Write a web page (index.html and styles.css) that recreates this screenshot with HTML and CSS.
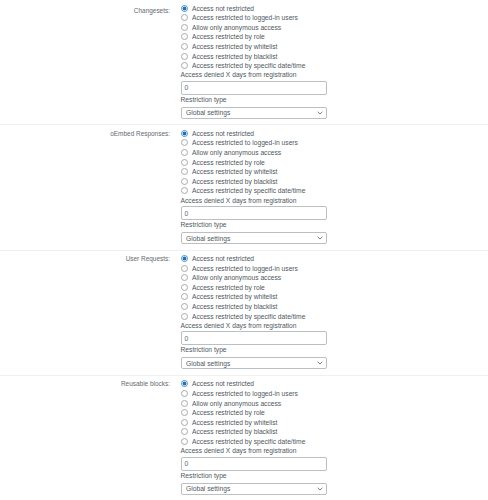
FILE: index.html
```html
<!DOCTYPE html>
<html lang="en">
<head>
<meta charset="utf-8">
<title>Access settings</title>
<link rel="stylesheet" href="styles.css">
</head>
<body>
<div class="settings">

  <section class="setting setting-first">
    <div class="setting-label">Changesets:</div>
    <div class="setting-field">
      <label class="opt"><input type="radio" name="s1" checked>Access not restricted</label>
      <label class="opt"><input type="radio" name="s1">Access restricted to logged-in users</label>
      <label class="opt"><input type="radio" name="s1">Allow only anonymous access</label>
      <label class="opt"><input type="radio" name="s1">Access restricted by role</label>
      <label class="opt"><input type="radio" name="s1">Access restricted by whitelist</label>
      <label class="opt"><input type="radio" name="s1">Access restricted by blacklist</label>
      <label class="opt"><input type="radio" name="s1">Access restricted by specific date/time</label>
      <div class="field-label">Access denied X days from registration</div>
      <div class="text-input">0</div>
      <div class="field-label field-label-select">Restriction type</div>
      <div class="select"><span>Global settings</span><svg class="chev" viewBox="0 0 6 4" width="6" height="4"><path d="M0.6 0.8 L3 3 L5.4 0.8" fill="none" stroke="#6b7075" stroke-width="0.9"/></svg></div>
    </div>
  </section>

  <section class="setting">
    <div class="setting-label">oEmbed Responses:</div>
    <div class="setting-field">
      <label class="opt"><input type="radio" name="s2" checked>Access not restricted</label>
      <label class="opt"><input type="radio" name="s2">Access restricted to logged-in users</label>
      <label class="opt"><input type="radio" name="s2">Allow only anonymous access</label>
      <label class="opt"><input type="radio" name="s2">Access restricted by role</label>
      <label class="opt"><input type="radio" name="s2">Access restricted by whitelist</label>
      <label class="opt"><input type="radio" name="s2">Access restricted by blacklist</label>
      <label class="opt"><input type="radio" name="s2">Access restricted by specific date/time</label>
      <div class="field-label">Access denied X days from registration</div>
      <div class="text-input">0</div>
      <div class="field-label field-label-select">Restriction type</div>
      <div class="select"><span>Global settings</span><svg class="chev" viewBox="0 0 6 4" width="6" height="4"><path d="M0.6 0.8 L3 3 L5.4 0.8" fill="none" stroke="#6b7075" stroke-width="0.9"/></svg></div>
    </div>
  </section>

  <section class="setting">
    <div class="setting-label">User Requests:</div>
    <div class="setting-field">
      <label class="opt"><input type="radio" name="s3" checked>Access not restricted</label>
      <label class="opt"><input type="radio" name="s3">Access restricted to logged-in users</label>
      <label class="opt"><input type="radio" name="s3">Allow only anonymous access</label>
      <label class="opt"><input type="radio" name="s3">Access restricted by role</label>
      <label class="opt"><input type="radio" name="s3">Access restricted by whitelist</label>
      <label class="opt"><input type="radio" name="s3">Access restricted by blacklist</label>
      <label class="opt"><input type="radio" name="s3">Access restricted by specific date/time</label>
      <div class="field-label">Access denied X days from registration</div>
      <div class="text-input">0</div>
      <div class="field-label field-label-select">Restriction type</div>
      <div class="select"><span>Global settings</span><svg class="chev" viewBox="0 0 6 4" width="6" height="4"><path d="M0.6 0.8 L3 3 L5.4 0.8" fill="none" stroke="#6b7075" stroke-width="0.9"/></svg></div>
    </div>
  </section>

  <section class="setting">
    <div class="setting-label">Reusable blocks:</div>
    <div class="setting-field">
      <label class="opt"><input type="radio" name="s4" checked>Access not restricted</label>
      <label class="opt"><input type="radio" name="s4">Access restricted to logged-in users</label>
      <label class="opt"><input type="radio" name="s4">Allow only anonymous access</label>
      <label class="opt"><input type="radio" name="s4">Access restricted by role</label>
      <label class="opt"><input type="radio" name="s4">Access restricted by whitelist</label>
      <label class="opt"><input type="radio" name="s4">Access restricted by blacklist</label>
      <label class="opt"><input type="radio" name="s4">Access restricted by specific date/time</label>
      <div class="field-label">Access denied X days from registration</div>
      <div class="text-input">0</div>
      <div class="field-label field-label-select">Restriction type</div>
      <div class="select"><span>Global settings</span><svg class="chev" viewBox="0 0 6 4" width="6" height="4"><path d="M0.6 0.8 L3 3 L5.4 0.8" fill="none" stroke="#6b7075" stroke-width="0.9"/></svg></div>
    </div>
  </section>

</div>
</body>
</html>
```

FILE: styles.css
```css
html, body {
  margin: 0;
  padding: 0;
  background: #ffffff;
}

body {
  font-family: "Liberation Sans", Arial, sans-serif;
  color: #50575e;
  overflow: hidden;
}

.settings {
  display: flex;
  flex-direction: column;
}

.setting {
  display: flex;
  align-items: flex-start;
  padding: 3.3px 0 5.5px 0;
  border-bottom: 1px solid #f0f0f1;
}

.setting-label {
  width: 170px;
  flex: none;
  text-align: right;
  font-size: 6.45px;
  line-height: 9.6px;
  color: #646970;
}

.setting-first .setting-label {
  padding-top: 2.6px;
}

.setting-field {
  margin-left: 10.5px;
  display: flex;
  flex-direction: column;
  width: 146px;
}

.opt {
  display: flex;
  align-items: center;
  height: 9.6px;
  font-size: 6.7px;
  white-space: nowrap;
}

.opt input {
  appearance: none;
  -webkit-appearance: none;
  box-sizing: border-box;
  width: 7px;
  height: 7px;
  margin: 0 4.5px 0 0;
  border: 0.7px solid #a7aaad;
  border-radius: 50%;
  background: #ffffff;
  flex: none;
}

.opt input:checked {
  border-color: #4f8ec4;
  background: radial-gradient(circle, #2271b1 0 1.7px, #ffffff 2.2px);
}

.field-label {
  font-size: 6.7px;
  line-height: 10.3px;
  white-space: nowrap;
}

.field-label-select {
  line-height: 10.5px;
  margin-bottom: 1.5px;
}

.text-input {
  box-sizing: border-box;
  width: 146px;
  height: 14px;
  display: flex;
  align-items: center;
  padding: 0 3px;
  border: 1px solid #bcbfc2;
  border-radius: 2px;
  font-size: 6.7px;
  color: #646970;
  background: #ffffff;
}

.select {
  box-sizing: border-box;
  width: 146px;
  height: 12px;
  display: flex;
  align-items: center;
  justify-content: space-between;
  padding: 0 3px 0 4.5px;
  border: 1px solid #bcbfc2;
  border-radius: 2px;
  font-size: 6.7px;
  color: #50575e;
  background: #ffffff;
}

.chev {
  display: block;
  width: 6px;
  height: 4px;
}
```
